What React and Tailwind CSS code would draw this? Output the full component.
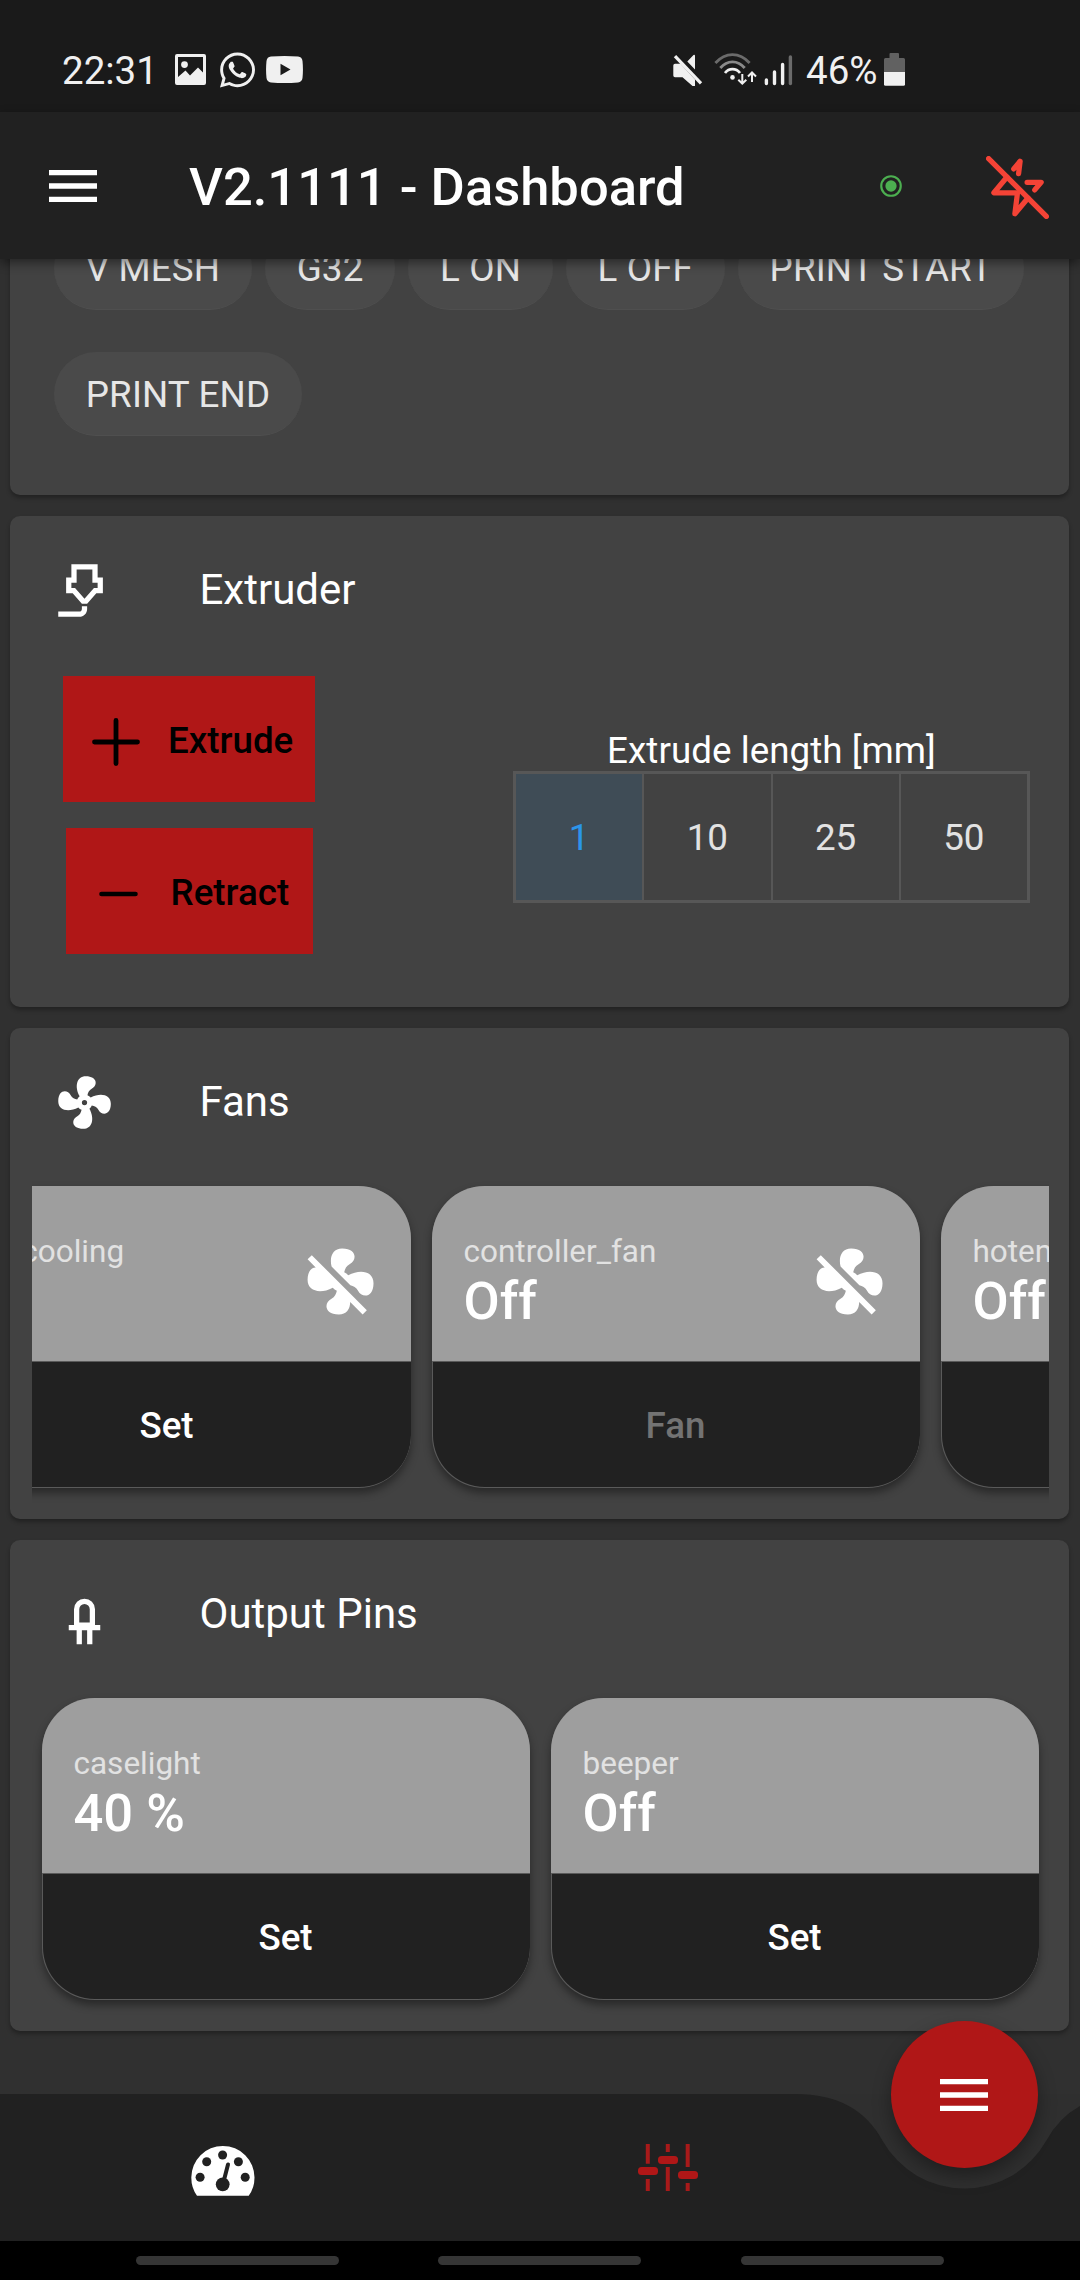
import React from "react";
import { FaWhatsapp } from "react-icons/fa";

const FAN =
  "M12,11A1,1 0 0,0 11,12A1,1 0 0,0 12,13A1,1 0 0,0 13,12A1,1 0 0,0 12,11M12.5,2C17,2 17.11,5.57 14.75,6.75C13.76,7.24 13.32,8.29 13.13,9.22C13.61,9.42 14.03,9.73 14.35,10.13C18.05,8.13 22.03,8.92 22.03,12.5C22.03,17 18.46,17.1 17.28,14.73C16.78,13.74 15.72,13.3 14.79,13.11C14.59,13.59 14.28,14 13.88,14.34C15.87,18.03 15.08,22 11.5,22C7,22 6.91,18.42 9.27,17.24C10.25,16.75 10.69,15.71 10.89,14.79C10.4,14.59 9.97,14.27 9.65,13.87C5.96,15.85 2,15.07 2,11.5C2,7 5.56,6.89 6.74,9.26C7.24,10.25 8.29,10.68 9.22,10.87C9.41,10.39 9.73,9.97 10.14,9.65C8.15,5.96 8.94,2 12.5,2Z";
const FAN_OFF =
  "M12.5,2C9.64,2 8.57,4.55 9.29,7.47L15,13.16C15.87,13.37 16.81,13.81 17.28,14.73C18.46,17.1 22.03,17 22.03,12.5C22.03,8.92 18.05,8.13 14.35,10.13C14.03,9.73 13.61,9.42 13.13,9.22C13.32,8.29 13.76,7.24 14.75,6.75C17.11,5.57 17,2 12.5,2M3.28,4L2,5.27L4.47,7.73C3.22,7.74 2,8.87 2,11.5C2,15.07 5.96,15.85 9.65,13.87C9.97,14.27 10.4,14.59 10.89,14.79C10.69,15.71 10.25,16.75 9.27,17.24C6.91,18.42 7,22 11.5,22C13.8,22 14.94,20.36 14.94,18.21L18.73,22L20,20.72L3.28,4Z";
const NOZZLE =
  "M7 2H17V7H19V13H16.5L13 17H11L7.5 13H5V7H7ZM9 4V9H7V11H8.4L12 15.1L15.6 11H17V9H15V4ZM10 22H2V20H10C10.6 20 11 19.6 11 19V18H13V19C13 20.7 11.7 22 10 22Z";
const LED =
  "M12 6A4 4 0 0 0 8 10V16H6V18H9V23.3H11V18H13V23.3H15V18H18V16H16V10A4 4 0 0 0 12 6ZM12 8A2 2 0 0 1 14 10V15H10V10A2 2 0 0 1 12 8Z";

function Glyph({ d, className }) {
  return (
    <svg viewBox="0 0 24 24" className={className} fill="currentColor" fillRule="evenodd">
      <path d={d} />
    </svg>
  );
}

function MenuIcon() {
  return (
    <svg viewBox="0 0 24 24" className="size-[64px] text-white" fill="currentColor">
      <path d="M3 18h18v-2H3v2zm0-5h18v-2H3v2zm0-7v2h18V6H3z" />
    </svg>
  );
}

function StatusBar() {
  return (
    <div className="flex h-[112px] shrink-0 items-center bg-[#1a1a1a] pt-[27px] pl-[62px] text-[#f0f0f0]">
      <span className="w-[113px] pt-[2px] text-[38.5px]">22:31</span>
      <svg viewBox="0 0 31 31" className="size-[31px]">
        <path
          fill="currentColor"
          fillRule="evenodd"
          d="M2 0H29Q31 0 31 2V29Q31 31 29 31H2Q0 31 0 29V2Q0 0 2 0ZM3 3V23L10.500 16.500L15 21.500L23 13.500L28 18.500V3ZM9.500 7.200A3.400 3.400 0 1 1 9.500 14A3.400 3.400 0 1 1 9.500 7.200Z"
        />
      </svg>
      <FaWhatsapp className="ml-[14px] h-[40px] w-[35px]" />
      <svg viewBox="0 0 37 27" className="ml-[11px] h-[27px] w-[37px]">
        <path
          fill="currentColor"
          fillRule="evenodd"
          d="M5 .6Q18.500 -.6 32 .6Q36 1 36.500 5Q37.400 13.500 36.500 22Q36 26 32 26.400Q18.500 27.600 5 26.400Q1 26 .5 22Q-.4 13.500 .5 5Q1 1 5 .6ZM14.500 7.800V19.200L24.500 13.500Z"
        />
      </svg>
      <svg viewBox="672 50 32 38" className="ml-[369px] h-[38px] w-[32px]">
        <path
          fill="currentColor"
          d="M675 62.700H680.500L695 78.500V85H692.500L682.500 76.200H675Q673.300 76.200 673.300 74.500V64.500Q673.300 62.700 675 62.700ZM687.300 60.500L693.500 54Q695 53.200 695 55V68.500Z"
        />
        <path stroke="#1a1a1a" strokeWidth="1.500" d="M677 53.500L702.500 80.500" />
        <path stroke="currentColor" strokeWidth="3.200" d="M675 55.200L701 82.400" />
      </svg>
      <svg viewBox="713 50 45 38" className="ml-[9px] h-[38px] w-[45px]" fill="none" stroke="currentColor" strokeWidth="2.800">
        <path stroke="#6b6b6b" d="M715.400 62Q723 53.600 732.500 53.600Q742 53.600 749.600 62" />
        <path stroke="#8a8a8a" d="M720.300 67Q725.500 60.800 732.500 60.800Q739.500 60.800 744.700 67" />
        <path d="M725 72Q728 68.200 732.500 68.200Q737 68.200 740 72" />
        <circle cx="732.500" cy="76.400" r="2.300" fill="currentColor" stroke="none" />
        <path strokeWidth="2" d="M742.300 73V82.500M738.300 78.700L742.300 82.700L746.300 78.700M752 81V71.500M748 75.500L752 71.500L756 75.500" />
      </svg>
      <svg viewBox="764 50 29 38" className="ml-[6px] h-[38px] w-[29px]" strokeWidth="3.400" strokeLinecap="round">
        <path stroke="currentColor" d="M766.400 79V82.600M774.500 71V82.600M782.600 63.500V82.600" />
        <path stroke="#6b6b6b" d="M790.400 56V82.600" />
      </svg>
      <span className="ml-[13px] w-[77px] pt-[2px] text-[38.5px]">46%</span>
      <svg viewBox="883 50 23 38" className="h-[38px] w-[23px]">
        <path fill="#616161" d="M889.500 53Q889.500 52 890.500 52H898Q899 52 899 53V57H903.500Q905 57 905 58.500V71H884V58.500Q884 57 885.500 57H889.500Z" />
        <path fill="currentColor" d="M884 71H905V83.200Q905 84.700 903.500 84.700H885.500Q884 84.700 884 83.200Z" />
      </svg>
    </div>
  );
}

function AppBar() {
  return (
    <header className="z-10 flex h-[147px] shrink-0 items-center bg-[#212121] pl-[41px] shadow-[0_4px_10px_rgba(0,0,0,0.45)]">
      <MenuIcon />
      <h1 className="ml-[84px] w-[689px] pt-[3px] text-[52.5px] leading-[60px] font-medium text-white">V2.1111 - Dashboard</h1>
      <svg viewBox="0 0 24 24" className="size-[26px] text-[#4caf50]">
        <circle cx="12" cy="12" r="9" fill="none" stroke="currentColor" strokeWidth="2" />
        <circle cx="12" cy="12" r="5.200" fill="currentColor" />
      </svg>
      <svg
        viewBox="0 0 24 24"
        className="mt-[4px] ml-[82px] size-[63px] text-[#f44336]"
        fill="none"
        stroke="currentColor"
        strokeWidth="2"
        strokeLinecap="round"
        strokeLinejoin="round"
      >
        <polyline points="12.41 6.75 13 2 10.57 4.92" />
        <polyline points="18.57 12.91 21 10 15.66 10" />
        <polyline points="8 8 3 14 12 14 11 22 16 16" />
        <line x1="1" y1="1" x2="23" y2="23" />
      </svg>
    </header>
  );
}

function Chip({ children }) {
  return (
    <div className="flex h-[84px] items-center rounded-full border-b border-[#4f4f4f] bg-[#4a4a4a] px-[31.75px] pt-[2px] text-[36.75px] tracking-[0.15px] whitespace-nowrap text-[#e6e6e6]">
      {children}
    </div>
  );
}

function Panel({ title, icon, children }) {
  return (
    <section className="mt-[21px] h-[491px] rounded-[10px] bg-[#424242] shadow-[0_3px_4px_rgba(0,0,0,0.3)]">
      <div className="flex h-[148px] items-center pl-[42.5px]">
        <Glyph d={icon} className="size-[63px] text-white" />
        <h2 className="ml-[84px] pb-[2px] text-[42px] text-white">{title}</h2>
      </div>
      {children}
    </section>
  );
}

function Tile({ name, value, action, off, disabled, nameClass = "" }) {
  return (
    <div className="h-[302px] w-[488px] shrink-0 overflow-hidden rounded-[52.5px] bg-[#5a5a5a] shadow-[0_5px_8px_rgba(0,0,0,0.4)]">
      <div className="flex h-[175px] justify-between bg-[#9e9e9e] px-[31.5px]">
        <div className="pt-[47px]">
          <div className={"text-[31.5px] leading-[37px] text-[#e2e2e2] " + nameClass}>{name}</div>
          <div className="text-[52.5px] leading-[62px] font-medium text-white">{value}</div>
        </div>
        {off && <Glyph d={FAN_OFF} className="mt-[56px] size-[79px] text-white" />}
      </div>
      <div
        className={
          "mt-px ml-px flex h-[125px] items-center justify-center rounded-b-[52px] bg-[#212121] pt-[2px] pr-[2px] text-[36.75px] font-medium " +
          (disabled ? "text-[#737373]" : "text-white")
        }
      >
        {action}
      </div>
    </div>
  );
}

function ExtruderBody() {
  return (
    <div className="flex pr-[39px] pl-[53px]">
      <div className="mt-[12px] flex flex-col items-center gap-[26px]">
        <button className="flex h-[126px] w-[252px] items-center bg-[#b01717] pl-[29px] text-[36.75px] font-medium text-black">
          <svg viewBox="0 0 48 48" className="mt-[6px] size-[48px]" stroke="currentColor" strokeWidth="4.800" strokeLinecap="round">
            <path d="M2.500 24H45.500M24 2.500V45.500" />
          </svg>
          <span className="ml-[28px] pt-[4px]">Extrude</span>
        </button>
        <button className="flex h-[126px] w-[247px] items-center bg-[#b01717] pl-[33px] text-[36.75px] font-medium text-black">
          <svg viewBox="0 0 39 10" className="mt-[5px] h-[10px] w-[39px]" stroke="currentColor" strokeWidth="4.600" strokeLinecap="round">
            <path d="M2.500 5H36.500" />
          </svg>
          <span className="ml-[33px] pt-[4px]">Retract</span>
        </button>
      </div>
      <div className="ml-auto flex w-[517px] flex-col pt-[65px]">
        <div className="text-center text-[36.75px] leading-[43px] tracking-[0.05px] text-white">Extrude length [mm]</div>
        <div className="-mt-px flex h-[132px] border-[3px] border-[#575757] text-[36.75px] text-[#e2e2e2]">
          <div className="flex flex-1 items-center justify-center bg-[#3f4c56] pt-[2px] text-[#2b95ea]">1</div>
          <div className="flex flex-1 items-center justify-center border-l-2 border-[#575757] pt-[2px]">10</div>
          <div className="flex flex-1 items-center justify-center border-l-2 border-[#575757] pt-[2px]">25</div>
          <div className="flex flex-1 items-center justify-center border-l-2 border-[#575757] pt-[2px]">50</div>
        </div>
      </div>
    </div>
  );
}

function GaugeIcon() {
  return (
    <svg viewBox="190 2145 66 52" className="h-[52px] w-[66px]">
      <path fill="#fff" d="M197 2195.700Q191.300 2188 191.300 2177.500A31.600 31.600 0 0 1 254.500 2177.500Q254.500 2188 248.700 2195.700Z" />
      <g fill="#212121">
        <circle cx="200.100" cy="2177.300" r="4.500" />
        <circle cx="206.700" cy="2161.800" r="4.500" />
        <circle cx="222.600" cy="2155" r="4.500" />
        <circle cx="238.400" cy="2161.800" r="4.500" />
        <circle cx="245.200" cy="2177.300" r="4.500" />
        <circle cx="222.700" cy="2184.300" r="6.900" />
      </g>
      <path stroke="#212121" strokeWidth="4" strokeLinecap="round" d="M224 2180L228 2164.500" />
    </svg>
  );
}

function SlidersIcon() {
  return (
    <svg viewBox="637 2143 62 50" className="h-[50px] w-[62px]">
      <path
        stroke="#a81a1a"
        strokeWidth="4"
        d="M647.800 2144V2163.700M647.800 2179V2191M667.800 2144V2152M667.800 2167V2191M687.700 2144V2167M687.700 2183V2191"
      />
      <g fill="#b01717">
        <rect x="638" y="2167" width="20" height="8" rx="3.500" />
        <rect x="658" y="2156" width="20" height="8" rx="3.500" />
        <rect x="678" y="2171" width="20" height="8" rx="3.500" />
      </g>
    </svg>
  );
}

function BottomBar() {
  return (
    <footer className="relative z-10 flex h-[147px] shrink-0 bg-[#212121]">
      <svg viewBox="796 2094 284 96" className="absolute top-0 right-0 h-[96px] w-[284px]">
        <path
          fill="#2f2f2f"
          d="M796 2094Q857 2094 882.400 2140.500A94 94 0 0 0 1046.400 2140.500Q1071.800 2094 1132.800 2094Z"
        />
      </svg>
      <div className="flex w-[446px] justify-center pt-[51px]">
        <GaugeIcon />
      </div>
      <div className="flex w-[444px] justify-center pt-[49px]">
        <SlidersIcon />
      </div>
      <button className="absolute -top-[73.5px] right-[42px] flex size-[147px] items-center justify-center rounded-full bg-[#b01717] pt-[1px] pr-[1px] shadow-[0_8px_18px_rgba(0,0,0,0.35)]">
        <MenuIcon />
      </button>
    </footer>
  );
}

export default function App() {
  return (
    <div className="flex h-[2280px] w-[1080px] flex-col overflow-hidden bg-[#303030] font-['Roboto',sans-serif]">
      <StatusBar />
      <AppBar />
      <main className="h-[1835px] shrink-0 pr-[11px] pl-[10px]">
        <section className="-mt-[60px] h-[296px] rounded-[10px] bg-[#424242] pt-[27px] pr-[40px] pl-[44px] shadow-[0_3px_4px_rgba(0,0,0,0.3)]">
          <div className="flex flex-wrap gap-x-[13px] gap-y-[42px]">
            <Chip>V MESH</Chip>
            <Chip>G32</Chip>
            <Chip>L ON</Chip>
            <Chip>L OFF</Chip>
            <Chip>PRINT START</Chip>
            <Chip>PRINT END</Chip>
          </div>
        </section>
        <Panel title="Extruder" icon={NOZZLE}>
          <ExtruderBody />
        </Panel>
        <Panel title="Fans" icon={FAN}>
          <div className="mr-[20px] ml-[22px] h-[330px] overflow-hidden pt-[10px]">
            <div className="-ml-[109px] flex gap-[21px]">
              <Tile name="part_cooling" nameClass="-ml-[4px]" value="Off" action="Set" off />
              <Tile name="controller_fan" value="Off" action="Fan" off disabled />
              <Tile name="hotend_fan" value="Off" action="Fan" off disabled />
            </div>
          </div>
        </Panel>
        <Panel title="Output Pins" icon={LED}>
          <div className="flex gap-[21px] pt-[10px] pl-[32px]">
            <Tile name="caselight" value="40 %" action="Set" />
            <Tile name="beeper" value="Off" action="Set" />
          </div>
        </Panel>
      </main>
      <BottomBar />
      <nav className="flex h-[39px] shrink-0 gap-[99px] bg-black pt-[15px] pl-[136px]">
        <div className="h-[9px] w-[203px] rounded-full bg-[#353535]" />
        <div className="h-[9px] w-[203px] rounded-full bg-[#353535]" />
        <div className="ml-px h-[9px] w-[203px] rounded-full bg-[#353535]" />
      </nav>
    </div>
  );
}
